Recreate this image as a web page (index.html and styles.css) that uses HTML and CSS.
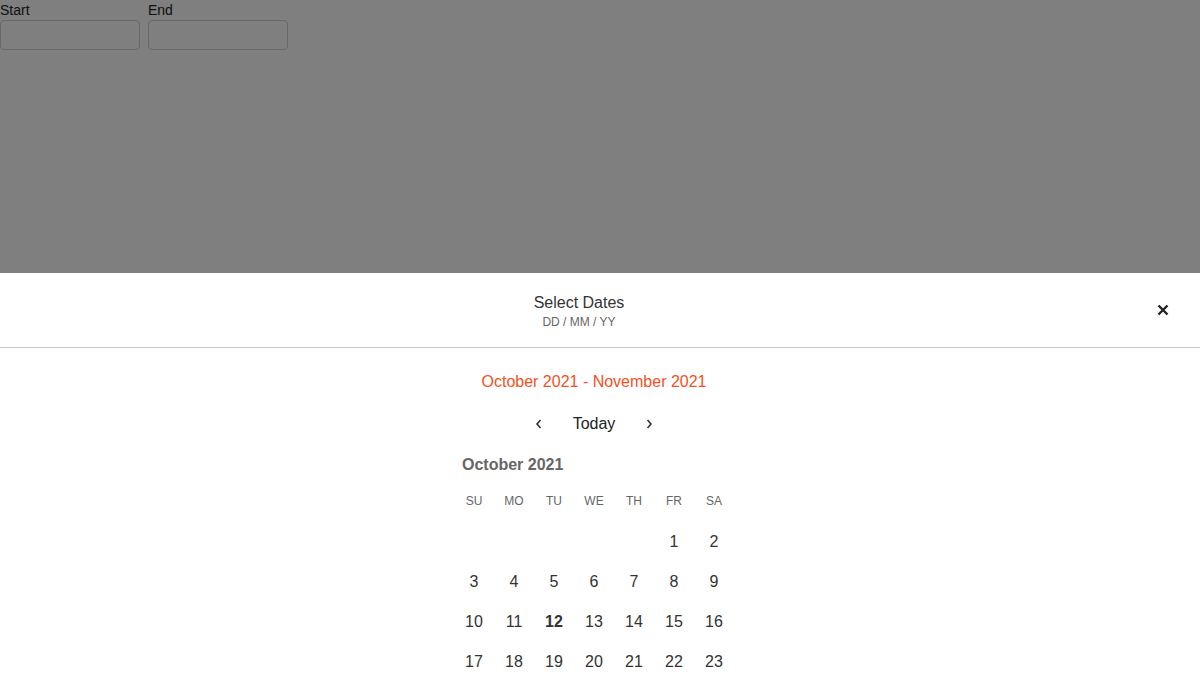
FILE: index.html
```html
<!DOCTYPE html>
<html>
<head>
<meta charset="utf-8">
<link rel="stylesheet" href="styles.css">
</head>
<body>
<div class="fields">
  <label class="field"><span class="field-label">Start</span><input class="field-input" type="text"></label>
  <label class="field"><span class="field-label">End</span><input class="field-input" type="text"></label>
</div>
<div class="overlay"></div>
<div class="sheet">
  <div class="sheet-header">
    <div class="titles">
      <div class="title">Select Dates</div>
      <div class="subtitle">DD / MM / YY</div>
    </div>
    <button class="close" aria-label="Close">
      <svg width="12" height="12" viewBox="0 0 12 12"><path d="M1.5 1.5 L10.5 10.5 M10.5 1.5 L1.5 10.5" stroke="#222" stroke-width="2.4" stroke-linecap="butt"/></svg>
    </button>
  </div>
  <div class="sheet-body">
    <div class="range">October 2021 - November 2021</div>
    <div class="nav">
      <button class="chev"><svg width="10" height="12" viewBox="0 0 10 12"><path d="M6.5 2 L3 6 L6.5 10" fill="none" stroke="#333" stroke-width="1.6"/></svg></button>
      <span class="today">Today</span>
      <button class="chev"><svg width="10" height="12" viewBox="0 0 10 12"><path d="M3.5 2 L7 6 L3.5 10" fill="none" stroke="#333" stroke-width="1.6"/></svg></button>
    </div>
    <div class="month">
      <div class="month-title">October 2021</div>
      <div class="grid weekdays">
        <div>SU</div><div>MO</div><div>TU</div><div>WE</div><div>TH</div><div>FR</div><div>SA</div>
      </div>
      <div class="grid days">
        <div></div><div></div><div></div><div></div><div></div><div>1</div><div>2</div>
        <div>3</div><div>4</div><div>5</div><div>6</div><div>7</div><div>8</div><div>9</div>
        <div>10</div><div>11</div><div class="cur">12</div><div>13</div><div>14</div><div>15</div><div>16</div>
        <div>17</div><div>18</div><div>19</div><div>20</div><div>21</div><div>22</div><div>23</div>
        <div>24</div><div>25</div><div>26</div><div>27</div><div>28</div><div>29</div><div>30</div>
        <div>31</div>
      </div>
    </div>
  </div>
</div>
</body>
</html>
```
FILE: styles.css
```css
html, body {
  margin: 0;
  padding: 0;
  background: #fff;
  font-family: "Liberation Sans", Arial, sans-serif;
  overflow: hidden;
  height: 682px;
}
.fields {
  display: flex;
  gap: 8px;
}
.field {
  display: flex;
  flex-direction: column;
}
.field-label {
  font-size: 14px;
  line-height: 20px;
  color: #222;
  height: 20px;
}
.field-input {
  box-sizing: border-box;
  width: 140px;
  height: 30px;
  margin: 0;
  border: 1px solid #d0d0d0;
  border-radius: 4px;
  background: #fff;
}
.overlay {
  position: fixed;
  inset: 0;
  background: rgba(0,0,0,0.5);
}
.sheet {
  position: fixed;
  left: 0;
  right: 0;
  top: 273px;
  bottom: 0;
  background: #fff;
  overflow: hidden;
}
.sheet-header {
  display: flex;
  align-items: center;
  padding: 20px 16px 17px 16px;
  border-bottom: 1px solid #c8c8c8;
}
.titles {
  flex: 1;
  text-align: center;
}
.title {
  font-size: 16px;
  line-height: 20px;
  color: #333;
}
.subtitle {
  font-size: 12px;
  line-height: 16px;
  margin-top: 1px;
  color: #666;
}
.close {
  width: 42px;
  height: 32px;
  border: 0;
  padding: 0;
  background: none;
  display: flex;
  align-items: center;
  justify-content: center;
  margin-bottom: 4px;
}
.sheet-body {
  display: flex;
  flex-direction: column;
  align-items: center;
  padding: 24px 12px 0 0;
}
.range {
  font-size: 16px;
  line-height: 20px;
  color: #f4511e;
}
.nav {
  display: flex;
  align-items: center;
  gap: 22px;
  margin-top: 22px;
  height: 20px;
}
.chev {
  width: 24px;
  height: 24px;
  border: 0;
  padding: 0;
  background: none;
  display: flex;
  align-items: center;
  justify-content: center;
}
.today {
  font-size: 16px;
  line-height: 20px;
  color: #222;
}
.month {
  margin-top: 21px;
  width: 280px;
}
.month-title {
  font-size: 16px;
  line-height: 20px;
  font-weight: bold;
  color: #666;
  padding-left: 8px;
}
.grid {
  display: grid;
  grid-template-columns: repeat(7, 40px);
}
.weekdays {
  margin-top: 6px;
}
.weekdays div {
  height: 40px;
  line-height: 40px;
  text-align: center;
  font-size: 12px;
  color: #666;
}
.days {
  margin-top: 1px;
}
.days div {
  height: 40px;
  line-height: 40px;
  text-align: center;
  font-size: 16px;
  color: #333;
}
.days .cur {
  font-weight: bold;
}
```
